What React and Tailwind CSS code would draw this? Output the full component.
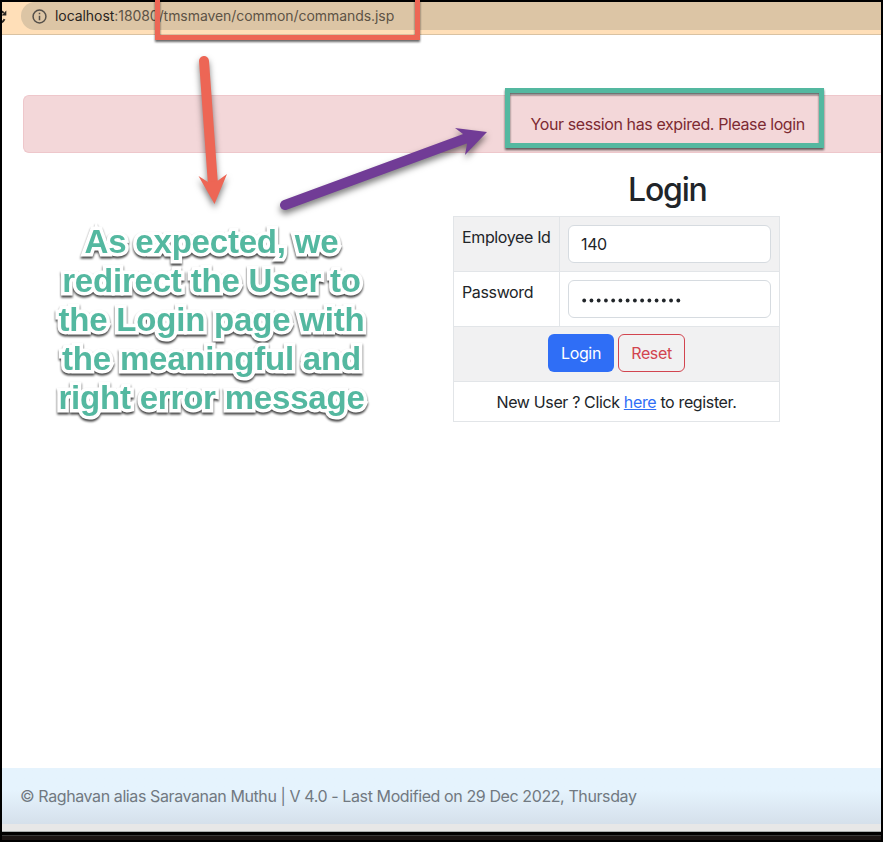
const annotation = [
  "As expected, we",
  "redirect the User to",
  "the Login page with",
  "the meaningful and",
  "right error message",
];

function AddressBar() {
  return (
    <header className="relative h-[33px] overflow-hidden border-b border-[#d9c2a2] bg-[#ffdfb8]">
      <svg className="absolute -left-[12px] top-[6px]" width="18" height="18" viewBox="0 0 18 18" fill="none" stroke="#2b2722" strokeWidth="2">
        <path d="M14.5 11.2A6 6 0 1 1 13.6 5" />
        <path d="M16.3 2.6v5h-5z" fill="#2b2722" stroke="none" />
      </svg>
      <div className="ml-[19px] flex h-[28px] items-center rounded-l-full bg-[#dcc5a5] pl-[11px]">
        <svg width="15" height="15" viewBox="0 0 14 14" fill="none" stroke="#55504a" strokeWidth="1.4">
          <circle cx="7" cy="7" r="6" />
          <path d="M7 6.2v4.2M7 3.4v1.5" />
        </svg>
        <span className="ml-[8px] whitespace-nowrap text-[14px] leading-[28px] tracking-[-0.06px] text-[#5d5345]">
          <span className="text-[#29241e]">localhost</span>:18080/tmsmaven/common/commands.jsp
        </span>
      </div>
    </header>
  );
}

function LoginForm() {
  return (
    <table className="ml-[451px] w-[327px] table-fixed border-collapse text-[16px] leading-6 tracking-[-0.36px] text-[#212529]">
      <colgroup>
        <col className="w-[106px]" />
        <col />
      </colgroup>
      <tbody>
        <tr className="h-[55px] bg-[#f1f1f2]">
          <td className="whitespace-nowrap border border-[#e2e5e8] px-2 pt-[8px] align-top">Employee Id</td>
          <td className="border border-[#e2e5e8] p-0">
            <div className="mx-auto h-[38px] w-[203px] rounded-md border border-[#d6dbe0] bg-white px-3 leading-[37px]">140</div>
          </td>
        </tr>
        <tr className="h-[55px]">
          <td className="border border-[#e2e5e8] px-2 pt-[8px] align-top">Password</td>
          <td className="border border-[#e2e5e8] p-0 pb-px">
            <div className="mx-auto h-[38px] w-[203px] rounded-md border border-[#d6dbe0] bg-white pl-[13px] pt-[17px]">
              <svg width="102" height="5" viewBox="0 0 102 5" fill="#212529">
                {Array.from({ length: 14 }, (_, i) => (
                  <circle key={i} cx={2.2 + i * 7.24} cy="2.5" r="1.9" />
                ))}
              </svg>
            </div>
          </td>
        </tr>
        <tr className="h-[55px] bg-[#f1f1f2]">
          <td colSpan={2} className="border border-[#e2e5e8] p-0 pb-[2px]">
            <div className="flex justify-center gap-1">
              <button className="h-[38px] w-[66px] rounded-md bg-[#2f6ef6] text-white">Login</button>
              <button className="h-[38px] w-[67px] rounded-md border border-[#d2444f] text-[#d2444f]">Reset</button>
            </div>
          </td>
        </tr>
        <tr className="h-[40px]">
          <td colSpan={2} className="border border-[#e2e5e8] p-0 text-center">
            New User ? Click <a className="text-[#2f6ef6] underline">here</a> to register.
          </td>
        </tr>
      </tbody>
    </table>
  );
}

export default function App() {
  return (
    <div className="relative flex h-[842px] w-[883px] flex-col overflow-hidden bg-black px-[2px] pt-[2px] font-['Inter',sans-serif]">
      <AddressBar />
      <main className="h-[733px] overflow-hidden bg-white pt-[60px]">
        <div className="ml-[21px] h-[58px] rounded-l-md border border-r-0 border-[#eec7cb] bg-[#f3d7d9] pl-[506.5px] text-[16px] leading-[57px] tracking-[-0.4px] text-[#7d2a32]">
          Your session has expired. Please login
        </div>
        <h1 className="ml-[451px] flex h-[63px] w-[430px] items-center pl-[175px] pt-[10px] text-[32px] font-[550] tracking-[-1.2px] text-[#212529]">Login</h1>
        <LoginForm />
      </main>
      <footer className="h-[56px] bg-linear-to-b from-[#e5f3fd] from-40% to-[#d5e0eb] pl-[18px] text-[16px] leading-[56px] tracking-[-0.4px] text-[#717981]">
        © Raghavan alias Saravanan Muthu | V 4.0 - Last Modified on 29 Dec 2022, Thursday
      </footer>
      <div className="h-[8px] border-b border-[#a8adad] bg-[#e7e7e7]" />
      <div className="mt-[3px] h-[5px] border-t border-[#393938] bg-[#1b1514]" />

      <div className="absolute left-[155px] top-[-10px] h-[50px] w-[265px] border-[5px] border-[#ed6655] drop-shadow-[0_2px_1px_rgba(0,0,0,0.6)]" />
      <div className="absolute left-[505px] top-[88px] h-[60px] w-[319px] border-[5px] border-[#54b8a0] drop-shadow-[0_2px_1px_rgba(0,0,0,0.6)]" />
      <svg className="absolute left-0 top-0 drop-shadow-[0_4px_3px_rgba(0,0,0,0.5)]" width="883" height="230" viewBox="0 0 883 230">
        <g fill="#ed6655">
          <path d="M204 61 L213 185" stroke="#ed6655" strokeWidth="10" strokeLinecap="round" />
          <path d="M198.500 176 L208 182 L218 180.500 L227 174 L214.500 204Z" />
        </g>
        <g fill="#713c96">
          <path d="M285 205 L467 138" stroke="#713c96" strokeWidth="10" strokeLinecap="round" />
          <path d="M455 128 L487 132 L465 155 L467 144 L463 134Z" />
        </g>
      </svg>
      <div className="absolute left-[11.5px] top-[222px] w-[400px] text-center font-['Liberation_Sans',Arial,sans-serif] text-[33px] font-bold leading-[39px] tracking-[-0.2px] text-[#54b8a0] [-webkit-text-stroke:7px_white] [paint-order:stroke_fill] [stroke-linejoin:round] drop-shadow-[0_2px_1px_rgba(0,0,0,0.75)]">
        {annotation.map((line) => (
          <div key={line} className="whitespace-nowrap">{line}</div>
        ))}
      </div>
    </div>
  );
}
